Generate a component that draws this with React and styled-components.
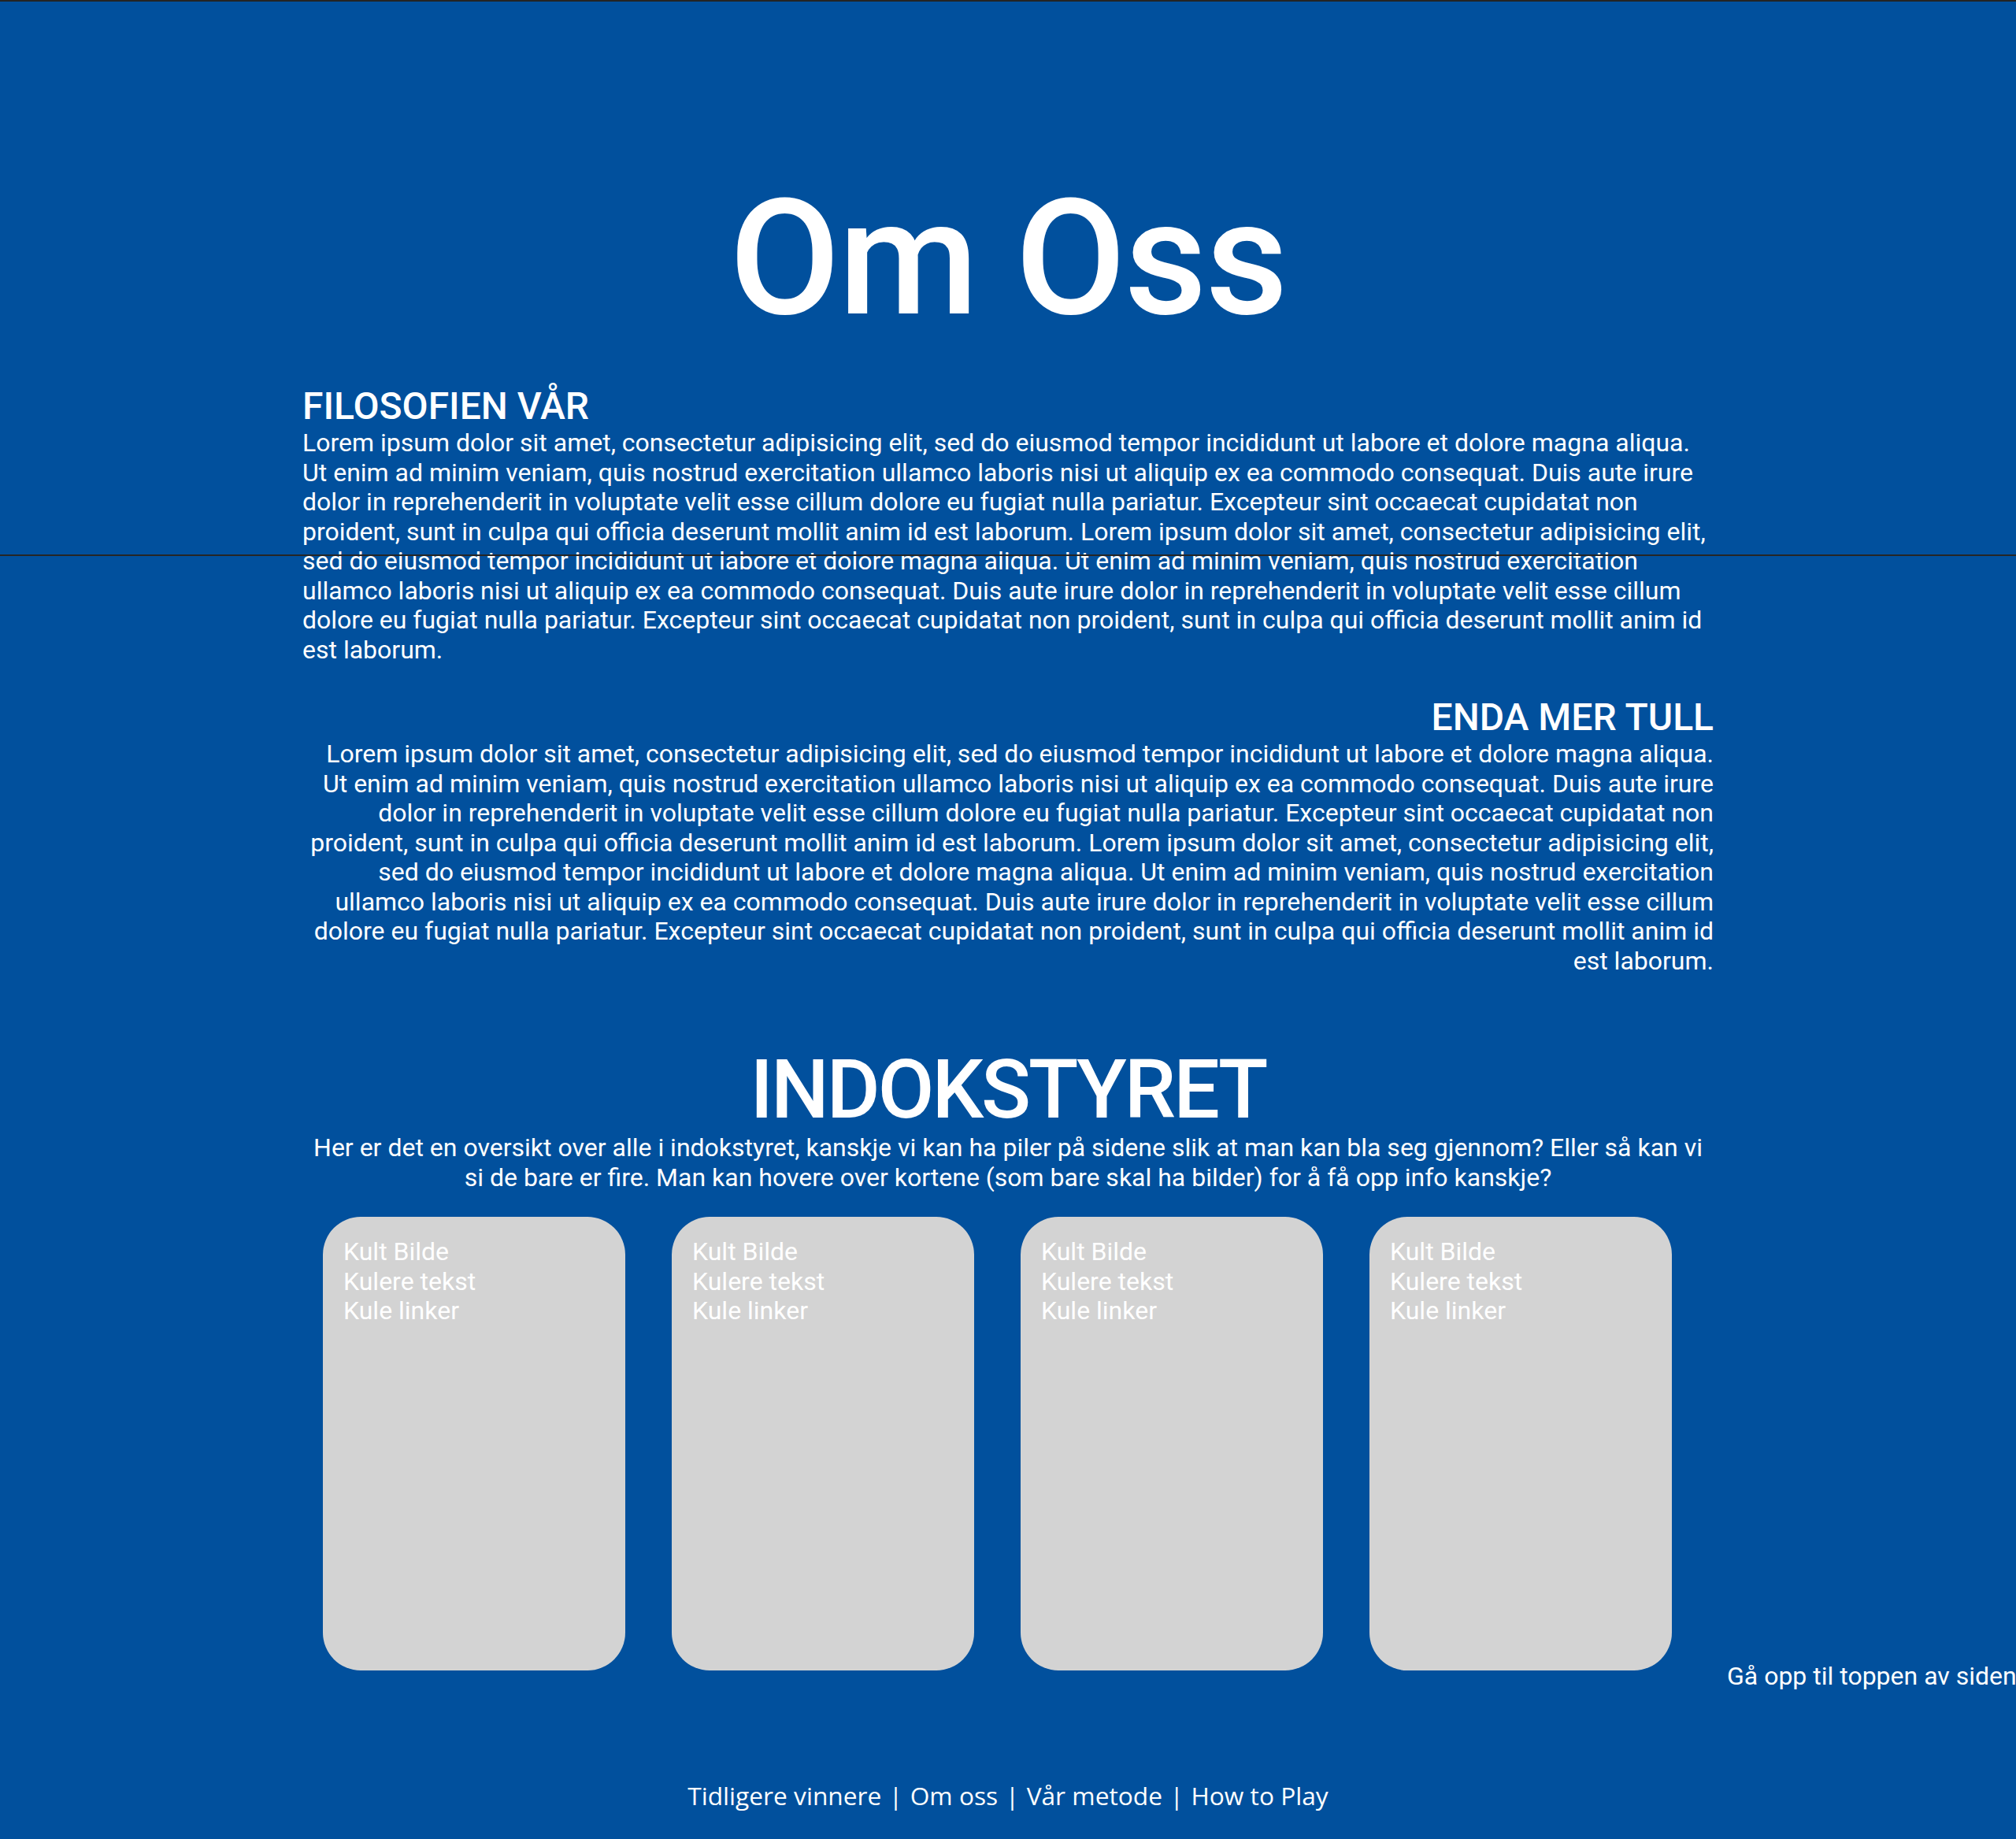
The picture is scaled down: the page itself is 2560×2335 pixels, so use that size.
import styled, { createGlobalStyle } from 'styled-components';

const GlobalStyle = createGlobalStyle`
  html {
    background: #01509d;
  }

  body {
    margin: 0;
    background: #01509d;
    color: #ffffff;
    font-family: Roboto, 'Liberation Sans', sans-serif;
  }
`;

const LOREM =
  'Lorem ipsum dolor sit amet, consectetur adipisicing elit, sed do eiusmod tempor incididunt ut labore et dolore magna aliqua. Ut enim ad minim veniam, quis nostrud exercitation ullamco laboris nisi ut aliquip ex ea commodo consequat. Duis aute irure dolor in reprehenderit in voluptate velit esse cillum dolore eu fugiat nulla pariatur. Excepteur sint occaecat cupidatat non proident, sunt in culpa qui officia deserunt mollit anim id est laborum.';

const StyledPage = styled.div`
  position: relative;
  border-top: 2px solid #242424;
  padding-top: 208px;
`;

const StyledRule = styled.div`
  position: absolute;
  top: 702px;
  left: 0;
  right: 0;
  height: 2px;
  background: #262626;
  pointer-events: none;
`;

const StyledTitle = styled.h1`
  margin: 0;
  font-size: 204px;
  font-weight: 500;
  line-height: 238px;
  letter-spacing: -2px;
  text-align: center;
`;

const StyledColumn = styled.main`
  width: 1792px;
  margin: 40px auto 0;
  display: flex;
  flex-direction: column;
  gap: 39px;
`;

const StyledArticle = styled.section`
  text-align: ${({ align }) => align};
`;

const StyledHeading = styled.h2`
  margin: 0;
  font-size: 48px;
  font-weight: 500;
  line-height: 56px;
`;

const StyledText = styled.p`
  margin: 0;
  font-size: 32px;
  line-height: 37.5px;
`;

const StyledBoard = styled.section`
  margin-top: 51px;
  text-align: center;
`;

const StyledBoardTitle = styled.h2`
  margin: 0;
  font-size: 104px;
  font-weight: 500;
  line-height: 110px;
  letter-spacing: -3px;
`;

const StyledRow = styled.div`
  display: flex;
  align-items: flex-end;
  margin-top: 31px;
  padding-left: 410px;
`;

const StyledCardList = styled.ul`
  display: flex;
  gap: 59px;
  margin: 0;
  padding: 0;
  list-style: none;
`;

const StyledCard = styled.li`
  box-sizing: border-box;
  width: 384px;
  height: 576px;
  padding: 26px;
  border-radius: 48px;
  background: #d3d3d3;
  color: #ffffff;
  font-size: 32px;
  line-height: 37.5px;
  text-align: left;
`;

const StyledTopLink = styled.a`
  margin: 0 0 -26px 70px;
  color: #ffffff;
  font-size: 32px;
  line-height: 37.5px;
  text-decoration: none;
  white-space: nowrap;
`;

const StyledFooter = styled.footer`
  margin-top: 137px;
  padding-bottom: 30px;
  font-family: 'Open Sans', 'Liberation Sans', sans-serif;
  font-size: 31.7px;
  line-height: 44px;
  text-align: center;
`;

const StyledFooterLink = styled.a`
  color: #ffffff;
  text-decoration: none;
`;

const StyledSeparator = styled.span`
  margin: 0 0.3em;
`;

const cards = [1, 2, 3, 4];
const links = ['Tidligere vinnere', 'Om oss', 'Vår metode', 'How to Play'];

const App = () => (
  <>
    <GlobalStyle />
    <StyledPage id="top">
      <StyledRule />
      <StyledTitle>Om Oss</StyledTitle>
      <StyledColumn>
        <StyledArticle align="left">
          <StyledHeading>FILOSOFIEN VÅR</StyledHeading>
          <StyledText>
            {LOREM} {LOREM}
          </StyledText>
        </StyledArticle>
        <StyledArticle align="right">
          <StyledHeading>ENDA MER TULL</StyledHeading>
          <StyledText>
            {LOREM} {LOREM}
          </StyledText>
        </StyledArticle>
        <StyledBoard>
          <StyledBoardTitle>INDOKSTYRET</StyledBoardTitle>
          <StyledText>
            Her er det en oversikt over alle i indokstyret, kanskje vi kan ha piler på sidene slik at man kan
            bla seg gjennom? Eller så kan vi si de bare er fire. Man kan hovere over kortene (som bare skal ha
            bilder) for å få opp info kanskje?
          </StyledText>
        </StyledBoard>
      </StyledColumn>
      <StyledRow>
        <StyledCardList>
          {cards.map((card) => (
            <StyledCard key={card}>
              Kult Bilde
              <br />
              Kulere tekst
              <br />
              Kule linker
            </StyledCard>
          ))}
        </StyledCardList>
        <StyledTopLink href="#top">Gå opp til toppen av siden</StyledTopLink>
      </StyledRow>
      <StyledFooter>
        {links.map((link, index) => (
          <span key={link}>
            {index > 0 && <StyledSeparator>|</StyledSeparator>}
            <StyledFooterLink href="#">{link}</StyledFooterLink>
          </span>
        ))}
      </StyledFooter>
    </StyledPage>
  </>
);

export default App;
